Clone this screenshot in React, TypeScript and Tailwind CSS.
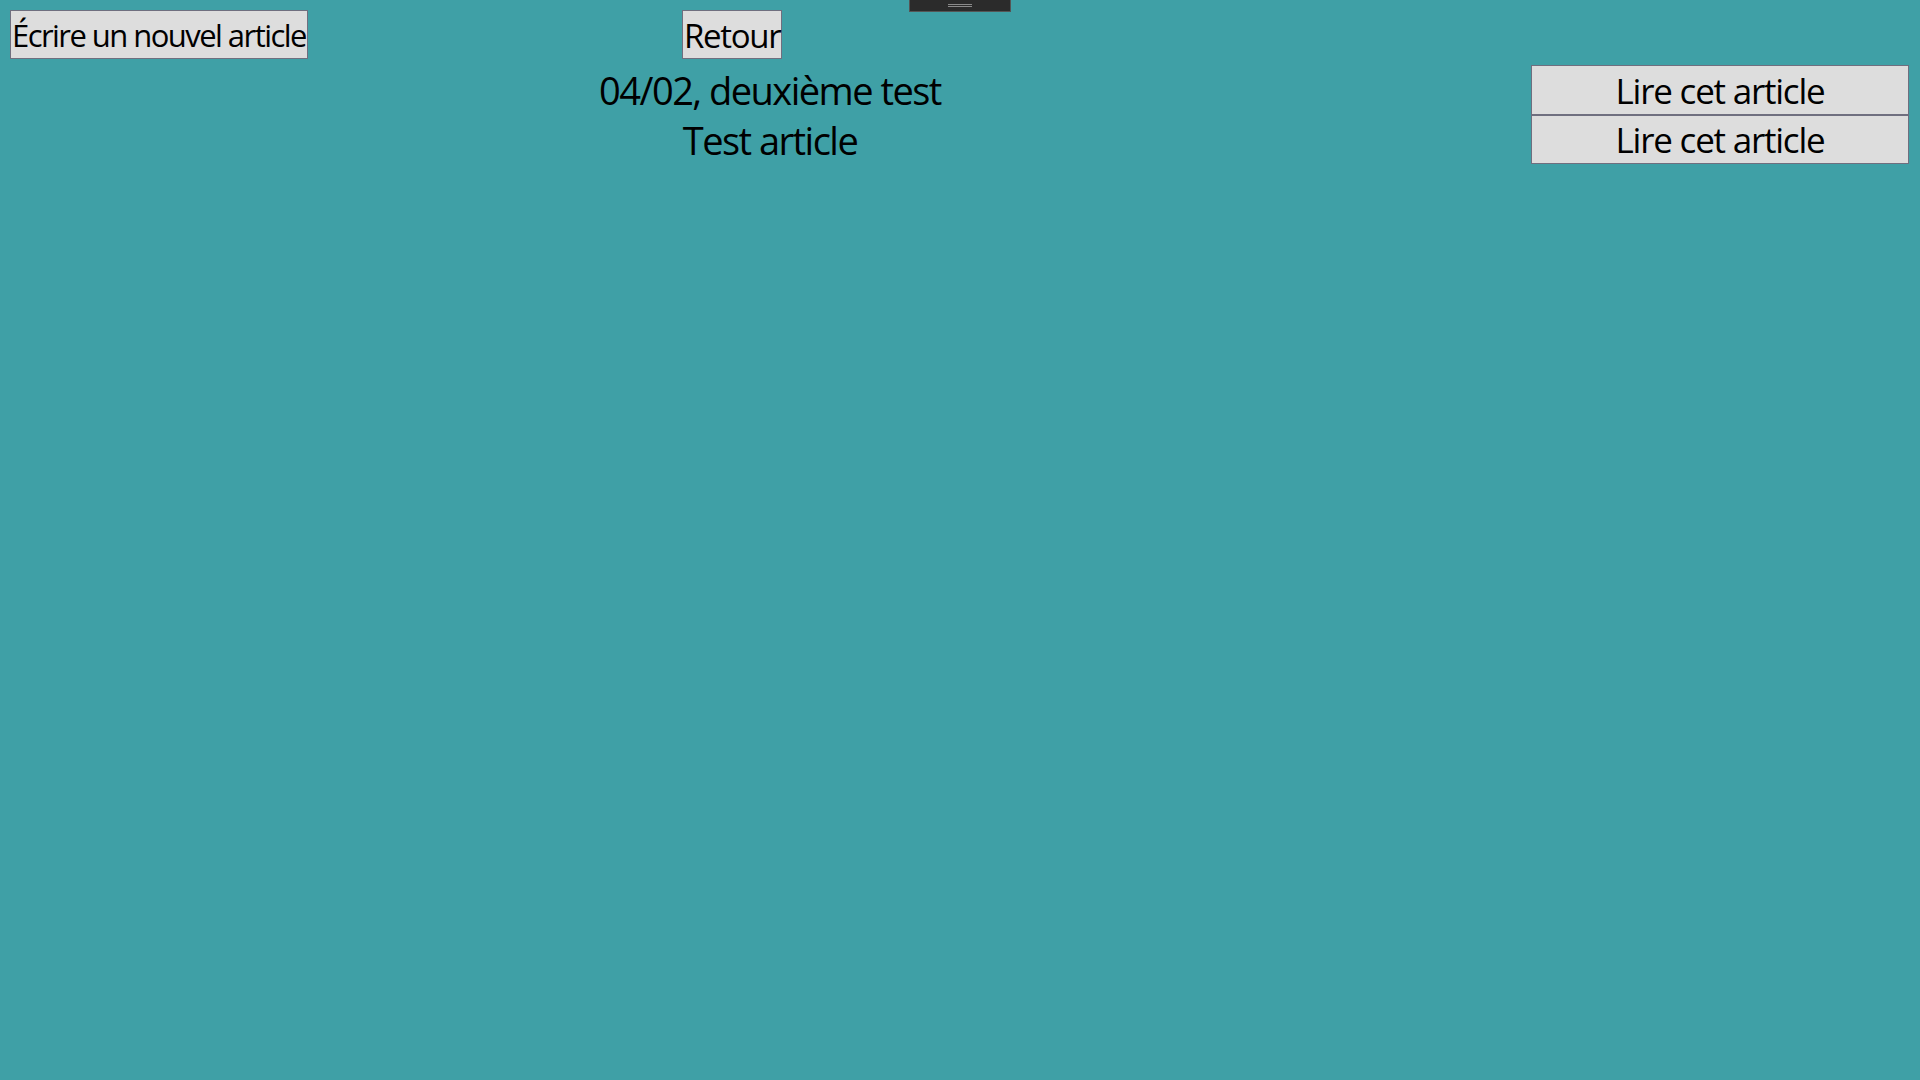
export default function App() {
  const font = { fontFamily: '"Open Sans", "Noto Sans", sans-serif' };
  return (
    <div className="relative min-h-screen w-full bg-[#3fa0a6] text-black" style={font}>
      {/* overlay handle at the top */}
      <div className="absolute left-[909px] top-0 flex h-[12px] w-[102px] items-center justify-center border border-[#555] border-t-0 bg-[#2b2b2b]">
        <div className="h-[3px] w-[24px] border-y border-[#8a8a8a]" />
      </div>

      <div className="flex items-start">
        <div className="w-[683px] pl-[10px] pt-[10px]">
          <button className="h-[49px] border border-[#6f6f7f] bg-[#dddddd] px-[1px] pt-[2px] text-[31px] leading-none tracking-[-0.05em]">
            Écrire un nouvel article
          </button>
        </div>

        <div className="w-[174px] pt-[10px]">
          <button className="-ml-[1px] h-[49px] border border-[#6f6f7f] bg-[#dddddd] px-[1px] pt-[2px] text-[33px] leading-none tracking-[-0.04em]">
            Retour
          </button>
          <div className="-ml-[200px] mt-[6px] w-[574px] text-center text-[38px] leading-[50px] tracking-[-0.04em]">
            <div>04/02, deuxième test</div>
            <div>Test article</div>
          </div>
        </div>

        <div className="flex-1" />

        <div className="flex w-[378px] flex-col pr-[11px] pt-[65px] box-content">
          <button className="h-[50px] border border-[#6f6f7f] bg-[#dddddd] text-[35px] leading-none tracking-[-0.035em]">
            Lire cet article
          </button>
          <button className="h-[49px] border border-[#6f6f7f] bg-[#dddddd] text-[35px] leading-none tracking-[-0.035em]">
            Lire cet article
          </button>
        </div>
      </div>
    </div>
  );
}
